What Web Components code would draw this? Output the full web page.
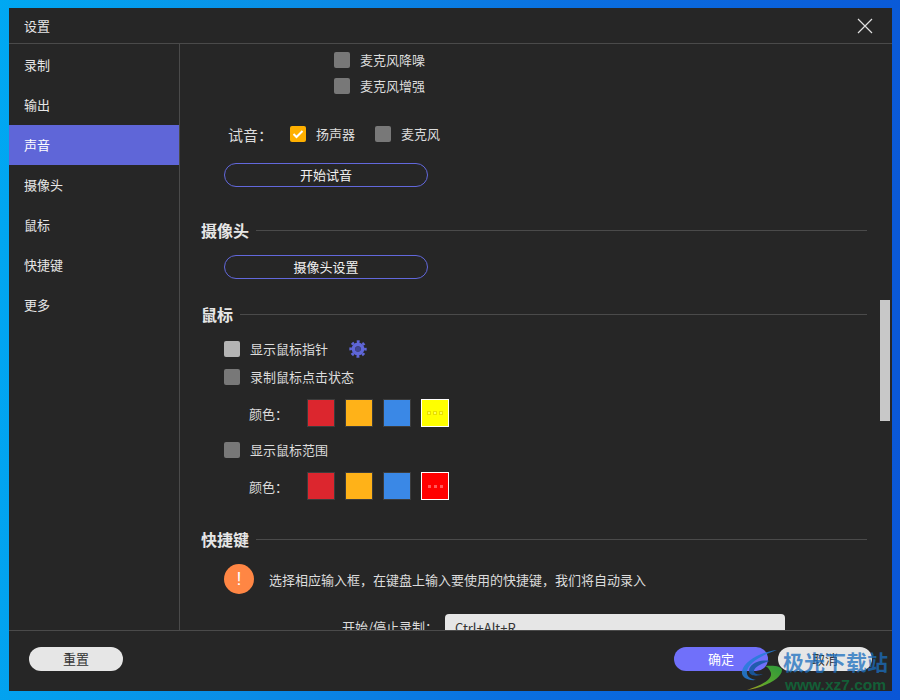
<!DOCTYPE html>
<html>
  <head>
    <meta charset="utf-8">
    <style>
      html, body { margin: 0; height: 100%; }
      body { font-family: "Noto Sans CJK SC", "Liberation Sans", sans-serif; }
    </style>
    <template id="desktop-bg">
      <style>
        :host { display: flex; box-sizing: border-box; position: relative; width: 900px; height: 700px; padding: 8px 8px 9px 9px;
          background: linear-gradient(95deg, #00a8f2 0%, #0a8ee6 30%, #0a6fe0 60%, #0a56d6 100%); overflow: hidden; }
      </style>
      <slot></slot>
    </template>

    <template id="settings-window">
      <style>
        :host { display: flex; flex-direction: column; flex: 1; background: #262626; color: #e6e6e6; font-size: 13px; position: relative; }
        header { height: 35px; flex: none; display: flex; align-items: center; justify-content: space-between; padding: 0 19px 0 15px; border-bottom: 1px solid #4a4a4a; }
        .mid { flex: 1; display: flex; min-height: 0; }
        nav { width: 170px; flex: none; border-right: 1px solid #4a4a4a; padding-top: 1px; }
        main { flex: 1; min-width: 0; overflow: hidden; position: relative; }
        footer { height: 61px; flex: none; border-top: 1px solid #4a4a4a; display: flex; align-items: center; justify-content: space-between; padding: 0 20px 4px; box-sizing: border-box; }
        .right { display: flex; gap: 10px; }
        .thumb { position: absolute; right: 2px; top: 256px; width: 10px; height: 121px; background: #c8c8c8; }
        svg { display: block; }
      </style>
      <header>
        <span><slot name="title"></slot></span>
        <svg width="16" height="16" viewBox="0 0 16 16"><path d="M1 1L15 15M15 1L1 15" stroke="#e0e0e0" stroke-width="1.2" fill="none"/></svg>
      </header>
      <div class="mid">
        <nav><slot name="nav"></slot></nav>
        <main><slot></slot><div class="thumb"></div></main>
      </div>
      <footer>
        <slot name="reset"></slot>
        <div class="right"><slot name="actions"></slot></div>
      </footer>
    </template>

    <template id="nav-item">
      <style>
        :host { display: flex; align-items: center; box-sizing: border-box; height: 40px; padding: 0 0 2px 15px; font-size: 13px; color: #e6e6e6; }
        :host([active]) { background: #5f66d8; color: #fff; }
      </style>
      <slot></slot>
    </template>

    <template id="check-row">
      <style>
        :host { display: flex; align-items: center; height: 16px; line-height: 16px; color: #dcdcdc; font-size: 13px; white-space: nowrap; }
        .box { width: 16px; height: 16px; border-radius: 2px; background: #787878; margin-right: 10px; flex: none; display: flex; align-items: center; justify-content: center; }
        :host([light]) .box { background: #b4b4b4; }
        :host([checked]) .box { background: #ffb000; }
        svg { display: none; }
        :host([checked]) svg { display: block; }
      </style>
      <span class="box"><svg width="12" height="10" viewBox="0 0 12 10"><path d="M1.5 5L4.5 8L10.5 2" stroke="#fff" stroke-width="2" fill="none"/></svg></span>
      <slot></slot>
    </template>

    <template id="section-head">
      <style>
        :host { display: flex; align-items: center; gap: 7px; height: 24px; font-size: 16px; font-weight: 700; color: #e6e6e6; }
        i { flex: 1; height: 1px; background: #4a4a4a; }
      </style>
      <slot></slot><i></i>
    </template>

    <template id="outline-button">
      <style>
        :host { display: flex; align-items: center; justify-content: center; box-sizing: border-box; width: 204px; height: 24px; padding-bottom: 2px; border: 1px solid #6268dc; border-radius: 12px; font-size: 13px; color: #f0f0f0; }
      </style>
      <slot></slot>
    </template>

    <template id="pill-button">
      <style>
        :host { display: flex; align-items: center; justify-content: center; box-sizing: border-box; width: 94px; height: 24px; padding-bottom: 1px; border-radius: 12px; background: #e6e6e6; color: #333; font-size: 13px; }
        :host([primary]) { background: #7070fa; color: #fff; }
      </style>
      <slot></slot>
    </template>

    <template id="color-row">
      <style>
        :host { display: flex; align-items: center; height: 28px; font-size: 13px; color: #dcdcdc; }
        .label { width: 58px; flex: none; }
        .swatches { display: flex; gap: 10px; }
        .s { box-sizing: border-box; width: 28px; height: 28px; border: 1px solid #3c3c3c; }
        .more { display: flex; align-items: center; justify-content: center; gap: 3px; border-color: #fff; }
        .more b { width: 3px; height: 3px; }
        :host([outlined]) .more { gap: 2px; }
        :host([outlined]) .more b { box-sizing: border-box; width: 4px; height: 4px; border: 1px solid #e8de00; background: #ffff50 !important; }
      </style>
      <span class="label"><slot></slot></span>
      <div class="swatches">
        <div class="s" style="background:#dc262e"></div>
        <div class="s" style="background:#ffb218"></div>
        <div class="s" style="background:#3a88e6"></div>
        <div class="s more" id="more"><b></b><b></b><b></b></div>
      </div>
    </template>

    <template id="sound-panel">
      <style>
        :host { display: block; padding: 8px 25px 0 21px; }
        .mics { display: flex; flex-direction: column; gap: 10px; margin-left: 133px; }
        .test { display: flex; align-items: center; height: 16px; margin: 32px 0 21px 27px; gap: 20px; }
        .test span { font-size: 15px; color: #dcdcdc; flex: none; width: 42px; white-space: nowrap; }
        .btn { margin-left: 23px; }
        section-head { margin-top: 31px; }
        .head2 { margin-top: 23px; }
        .gap { margin-top: 13px; }
        .rows { margin: 14px 0 0 23px; display: flex; flex-direction: column; }
        .gear { display: flex; align-items: center; gap: 21px; }
        svg { display: block; }
        .warn { display: flex; align-items: center; gap: 15px; margin: 13px 0 0 23px; font-size: 13px; color: #dcdcdc; }
        .dot { width: 30px; height: 30px; border-radius: 50%; background: #ff8644; color: #fff; font: 18px "Liberation Sans", sans-serif; display: flex; align-items: center; justify-content: center; }
        .key { display: flex; align-items: flex-start; margin: 20px 0 0 0; font-size: 13px; color: #dcdcdc; }
        .key label { width: 237px; padding-top: 3px; text-align: right; flex: none; white-space: nowrap; }
        .key div { margin-left: 7px; width: 340px; height: 30px; box-sizing: border-box; padding: 4px 10px 0; background: #e6e6e6; color: #333; border-radius: 4px; line-height: 20px; }
      </style>
      <div class="mics">
        <check-row>麦克风降噪</check-row>
        <check-row>麦克风增强</check-row>
      </div>
      <div class="test">
        <span>试音：</span>
        <check-row checked>扬声器</check-row>
        <check-row>麦克风</check-row>
      </div>
      <outline-button class="btn">开始试音</outline-button>

      <section-head>摄像头</section-head>
      <outline-button class="btn gap">摄像头设置</outline-button>

      <section-head class="head2">鼠标</section-head>
      <div class="rows">
        <div class="gear">
          <check-row light>显示鼠标指针</check-row>
          <svg width="18" height="18" viewBox="0 0 18 18" fill="none">
            <circle cx="9" cy="9" r="2.6" fill="#3f4494"/>
            <circle cx="9" cy="9" r="4.6" stroke="#5f66d8" stroke-width="3.6"/>
            <circle cx="9" cy="9" r="7.4" stroke="#5f66d8" stroke-width="2.6" stroke-dasharray="2.9 2.91" stroke-dashoffset="1.45"/>
          </svg>
        </div>
        <check-row style="margin-top:11px">录制鼠标点击状态</check-row>
        <color-row style="margin:14px 0 0 25px" more="#ffff00" dots="#e8de00" outlined>颜色：</color-row>
        <check-row style="margin-top:15px">显示鼠标范围</check-row>
        <color-row style="margin:14px 0 0 25px" more="#ff0000" dots="#ff5a5a">颜色：</color-row>
      </div>

      <section-head style="margin-top:27px">快捷键</section-head>
      <div class="warn"><span class="dot">!</span>选择相应输入框，在键盘上输入要使用的快捷键，我们将自动录入</div>
      <div class="key"><label>开始/停止录制：</label><div>Ctrl+Alt+R</div></div>
    </template>

    <template id="site-mark">
      <style>
        :host { position: absolute; left: 738px; top: 646px; width: 160px; height: 46px; display: block; pointer-events: none; }
        svg { position: absolute; left: 2px; top: 4px; }
        .t { position: absolute; left: 45px; top: 1px; font-size: 21px; line-height: 28px; font-weight: 700; color: rgba(26,110,190,.75); white-space: nowrap; }
        .u { position: absolute; left: 47px; top: 29px; font: 700 15.5px/20px "Liberation Sans", sans-serif; color: rgba(14,110,60,.8); white-space: nowrap; }
      </style>
      <svg width="46" height="42" viewBox="0 0 46 42">
        <defs><linearGradient id="sw" x1="0.9" y1="0" x2="0" y2="1"><stop offset="0" stop-color="#2f9a3a"/><stop offset="0.6" stop-color="#5aa62c"/><stop offset="1" stop-color="#b0a020"/></linearGradient></defs>
        <path d="M37 0C22 2 5 10 2 21c-1 6 5 10 14 9-6-1-10-4-9-9C9 12 22 5 37 0z" fill="rgba(35,125,215,.85)"/>
        <path d="M30 11C20 9 9 14 9 21c0 5 8 6 14 3-5 1-9 0-9-3 0-4 8-8 16-10z" fill="rgba(24,90,165,.9)"/>
        <path d="M25 16c8-1 17 0 17 4 0 8-16 17-35 20 14-5 25-10 24-17-1-3-3-6-6-7z" fill="url(#sw)"/>
      </svg>
      <span class="t"><slot></slot></span>
      <span class="u"><slot name="url"></slot></span>
    </template>

    <script>
      function plain(name, extra) {
        customElements.define(name, class extends HTMLElement {
          constructor() {
            super();
            let root = this.attachShadow({mode: 'open'});
            root.appendChild(document.getElementById(name).content.cloneNode(true));
          }
          connectedCallback() {
            if (extra) extra(this);
          }
        });
      }
      plain('desktop-bg');
      plain('settings-window');
      plain('nav-item');
      plain('check-row');
      plain('section-head');
      plain('outline-button');
      plain('pill-button');
      plain('sound-panel');
      plain('site-mark');
      plain('color-row', function (el) {
        let more = el.shadowRoot.getElementById('more');
        more.style.background = el.getAttribute('more');
        more.querySelectorAll('b').forEach(function (b) {
          b.style.background = el.getAttribute('dots');
        });
      });
    </script>
  </head>
  <body>
    <desktop-bg>
      <settings-window>
        <span slot="title">设置</span>
        <nav-item slot="nav">录制</nav-item>
        <nav-item slot="nav">输出</nav-item>
        <nav-item slot="nav" active>声音</nav-item>
        <nav-item slot="nav">摄像头</nav-item>
        <nav-item slot="nav">鼠标</nav-item>
        <nav-item slot="nav">快捷键</nav-item>
        <nav-item slot="nav">更多</nav-item>
        <sound-panel></sound-panel>
        <pill-button slot="reset">重置</pill-button>
        <pill-button slot="actions" primary>确定</pill-button>
        <pill-button slot="actions">取消</pill-button>
      </settings-window>
      <site-mark>极光下载站<span slot="url">www.xz7.com</span></site-mark>
    </desktop-bg>
  </body>
</html>
